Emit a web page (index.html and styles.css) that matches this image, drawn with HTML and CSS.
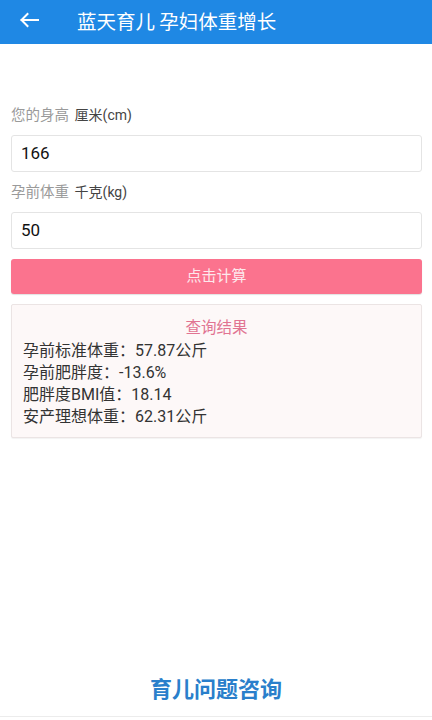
FILE: index.html
```html
<!DOCTYPE html>
<html lang="zh-CN">
<head>
<meta charset="utf-8">
<title>蓝天育儿 孕妇体重增长</title>
<link rel="stylesheet" href="styles.css">
</head>
<body>
<div class="page">
  <header class="topbar">
    <svg class="back" width="20" height="16" viewBox="0 0 20 16" aria-hidden="true">
      <path d="M19 8H2.5M8.5 2L2.5 8l6 6" fill="none" stroke="#fff" stroke-width="2" stroke-linecap="square"/>
    </svg>
    <h1 class="title">蓝天育儿 孕妇体重增长</h1>
  </header>
  <main class="content">
    <div class="label"><span class="label-name">您的身高</span> <span class="label-unit">厘米(cm)</span></div>
    <div class="field">166</div>
    <div class="label"><span class="label-name">孕前体重</span> <span class="label-unit">千克(kg)</span></div>
    <div class="field">50</div>
    <div class="btn">点击计算</div>
    <section class="result">
      <div class="result-title">查询结果</div>
      <div class="result-line">孕前标准体重：57.87公斤</div>
      <div class="result-line">孕前肥胖度：-13.6%</div>
      <div class="result-line">肥胖度BMI值：18.14</div>
      <div class="result-line">安产理想体重：62.31公斤</div>
    </section>
  </main>
  <footer class="footer">育儿问题咨询</footer>
</div>
</body>
</html>
```
FILE: styles.css
```css
html, body {
  margin: 0;
  padding: 0;
  background: #fff;
}
body {
  font-family: Roboto, "Noto Sans CJK SC", sans-serif;
}
.page {
  width: 432px;
  height: 720px;
  display: flex;
  flex-direction: column;
  overflow: hidden;
}
.topbar {
  height: 44px;
  box-sizing: border-box;
  padding: 0 0 2px 19px;
  background: #1f88e4;
  display: flex;
  align-items: center;
}
.back {
  display: block;
  flex: none;
  margin-top: -2px;
}
.title {
  margin: 0 0 0 38px;
  font-family: "Noto Sans CJK SC", sans-serif;
  font-size: 19.5px;
  font-weight: 400;
  color: #fff;
  line-height: 24px;
}
.content {
  padding: 51px 10px 0 11px;
  display: flex;
  flex-direction: column;
}
.label {
  height: 40px;
  line-height: 40px;
  font-size: 14.5px;
}
.label-name {
  color: #9a9a9a;
}
.label-unit {
  margin-left: 2px;
  color: #444;
  font-size: 14px;
}
.field {
  height: 37px;
  box-sizing: border-box;
  border: 1px solid #e4e4e4;
  border-radius: 3px;
  padding-left: 9px;
  font-size: 17px;
  line-height: 35px;
  color: #111;
}
.btn {
  margin-top: 10px;
  height: 35px;
  line-height: 35px;
  border-radius: 3px;
  background: #fb738e;
  color: #fde8ec;
  text-align: center;
  font-size: 15px;
  box-shadow: 0 1px 1px rgba(0,0,0,0.12);
}
.result {
  margin-top: 10px;
  border: 1px solid #ebe4e4;
  border-radius: 2px;
  background: #fdf8f8;
  padding: 11px 11px 9px;
  box-shadow: 0 1px 1px rgba(0,0,0,0.05);
}
.result-title {
  text-align: center;
  color: #e17492;
  font-size: 15.5px;
  line-height: 24px;
}
.result-line {
  font-size: 16px;
  line-height: 22px;
  color: #333;
}
.footer {
  margin-top: auto;
  margin-bottom: 3px;
  height: 58px;
  line-height: 58px;
  border-bottom: 1px solid #ececec;
  text-align: center;
  font-family: "Noto Sans CJK SC", sans-serif;
  font-size: 22px;
  font-weight: 700;
  color: #2a7fcb;
}
```
